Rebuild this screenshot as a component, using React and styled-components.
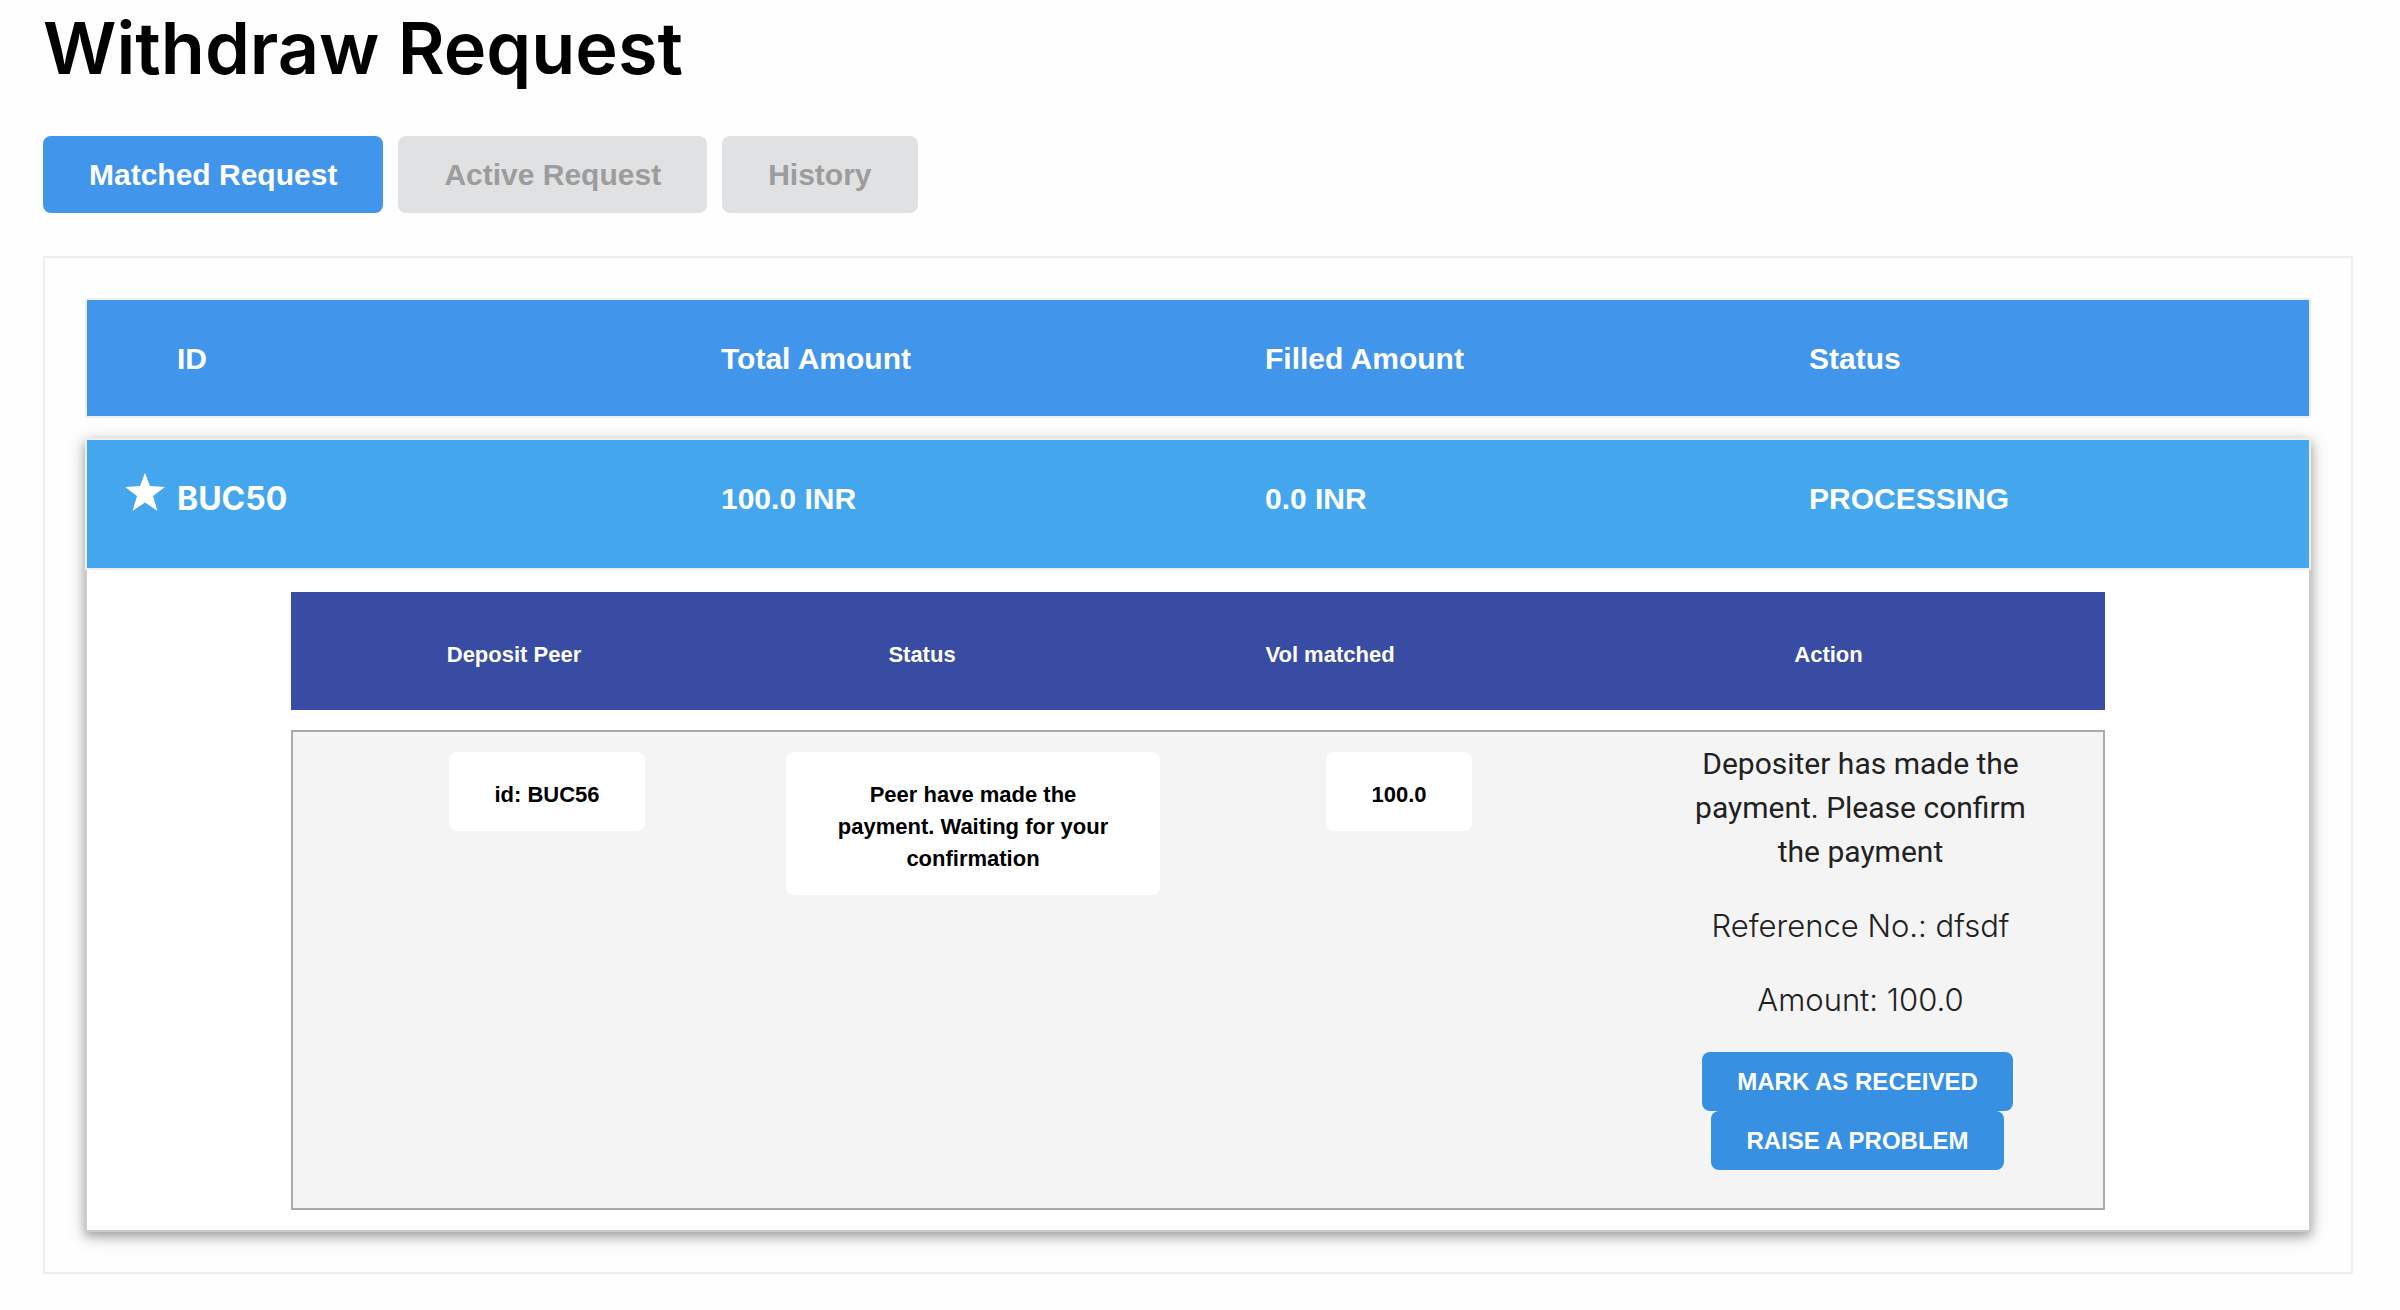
import React from "react";
import styled, { createGlobalStyle } from "styled-components";

const sans = '"Liberation Sans", Arial, sans-serif';
const display = 'Inter, "Open Sans", sans-serif';

const GlobalStyle = createGlobalStyle`
  *, *::before, *::after { box-sizing: border-box; }
  body { margin: 0; background: #fefefe; color: #000; font-family: ${sans}; }
`;

const Page = styled.main`
  padding: 8px 47px 36px 43px;
`;

const Title = styled.h1`
  margin: 0 0 48px;
  font: 600 72px/80px ${display};
`;

const Tabs = styled.nav`
  display: flex;
  gap: 15px;
  margin-bottom: 43px;
`;

const Tab = styled.button`
  padding: 17px 46px 16px;
  border: 0;
  border-radius: 8px;
  background: ${(p) => (p.$active ? "#4195eb" : "#e0e1e2")};
  color: ${(p) => (p.$active ? "#fff" : "#9c9c9c")};
  font: 700 30px/44px ${sans};
  cursor: pointer;
`;

const Panel = styled.section`
  padding: 40px;
  border: 2px solid #eee;
`;

const RequestTable = styled.table`
  display: flex;
  flex-direction: column;
  gap: 20px;
`;

const Head = styled.thead`
  display: block;
`;

const Card = styled.tbody`
  display: block;
  box-shadow: 0 4px 10px rgba(0, 0, 0, 0.3), 0 4px 20px rgba(0, 0, 0, 0.16);
`;

const RequestRow = styled.tr`
  display: grid;
  grid-template-columns: 596fr 544fr 544fr 500fr;
  padding: ${(p) => (p.$head ? "37px 0 35px 38px" : "37px 0 47px 38px")};
  border: 2px solid #eee;
  background: ${(p) => (p.$head ? "#4195eb" : "#44a7ee")};
  color: #fff;
  font: 700 30px/44px ${sans};
  text-align: left;
`;

const HeadCell = styled.th`
  padding: 0 0 0 ${(p) => (p.$indent ? "52px" : "0")};
`;

const Cell = styled.td`
  padding: 0;
`;

const IdCell = styled.td`
  display: flex;
  gap: 12px;
  padding: 0;
  font-family: ${display};
  font-size: 32px;
`;

const Star = styled.svg`
  width: 40px;
  height: 38px;
  margin-top: -4px;
  fill: #fff;
`;

const DetailRow = styled.tr`
  display: block;
  border: 2px solid #ccc;
  border-top: 0;
  background: #fff;
`;

const DetailCell = styled.td`
  display: block;
  padding: 22px 204px 20px;
`;

const PeerTable = styled.table`
  display: flex;
  flex-direction: column;
  gap: 20px;
  text-align: center;
`;

const PeerBody = styled.tbody`
  display: block;
`;

const PeerHeadRow = styled.tr`
  display: grid;
  grid-template-columns: 408fr 408fr 408fr 571fr;
  padding: 47px 0 39px 19px;
  background: #384ca4;
  color: #fff;
  font: 700 22px/32px ${sans};
`;

const PeerHeadCell = styled.th`
  padding: 0 0 0 ${(p) => (p.$last ? "18px" : "0")};
`;

const PeerRow = styled.tr`
  display: grid;
  grid-template-columns: 426fr 426fr 426fr 491fr;
  padding-left: 41px;
  border: 2px solid #aaa;
  background: #f4f4f4;
`;

const ChipCell = styled.td`
  padding: 20px 26px;
`;

const Chip = styled.span`
  display: inline-block;
  padding: 27px 45px 20px;
  border-radius: 8px;
  background: #fff;
  font: 700 22px/32px ${sans};
`;

const ActionCell = styled.td`
  padding: 10px 0 38px;
`;

const Message = styled.p`
  margin: 0 0 30px;
  padding: 0 66px 0 72px;
  color: #212121;
  font: 400 30px/44px Roboto, sans-serif;
`;

const Detail = styled(Message)`
  font: 300 31px/44px ${display};
`;

const Actions = styled.div`
  display: flex;
  flex-direction: column;
  align-items: center;
`;

const ActionButton = styled.button`
  padding: 14px 35px 13px;
  border: 0;
  border-radius: 8px;
  background: #3790e2;
  color: #fff;
  font: 700 24px/32px ${sans};
  text-transform: uppercase;
  cursor: pointer;
`;

const tabs = ["Matched Request", "Active Request", "History"];
const columns = ["ID", "Total Amount", "Filled Amount", "Status"];
const peerColumns = ["Deposit Peer", "Status", "Vol matched", "Action"];
const chips = [
  "id: BUC56",
  "Peer have made the payment. Waiting for your confirmation",
  "100.0",
];

export default function App() {
  return (
    <>
      <GlobalStyle />
      <Page>
        <Title>Withdraw Request</Title>
        <Tabs>
          {tabs.map((label, i) => (
            <Tab key={label} type="button" $active={i === 0}>
              {label}
            </Tab>
          ))}
        </Tabs>
        <Panel>
          <RequestTable>
            <Head>
              <RequestRow $head>
                {columns.map((name, i) => (
                  <HeadCell key={name} scope="col" $indent={i === 0}>
                    {name}
                  </HeadCell>
                ))}
              </RequestRow>
            </Head>
            <Card>
              <RequestRow>
                <IdCell>
                  <Star viewBox="0 0 40 38" aria-hidden="true">
                    <path d="M20 0 25 13 40 14 28 23 32.500 38 20 29.500 7.500 38 12 23 0 14 15 13Z" />
                  </Star>
                  BUC50
                </IdCell>
                <Cell>100.0 INR</Cell>
                <Cell>0.0 INR</Cell>
                <Cell>PROCESSING</Cell>
              </RequestRow>
              <DetailRow>
                <DetailCell colSpan={4}>
                  <PeerTable>
                    <Head>
                      <PeerHeadRow>
                        {peerColumns.map((name, i) => (
                          <PeerHeadCell key={name} scope="col" $last={i === 3}>
                            {name}
                          </PeerHeadCell>
                        ))}
                      </PeerHeadRow>
                    </Head>
                    <PeerBody>
                      <PeerRow>
                        {chips.map((text) => (
                          <ChipCell key={text}>
                            <Chip>{text}</Chip>
                          </ChipCell>
                        ))}
                        <ActionCell>
                          <Message>
                            Depositer has made the payment. Please confirm the
                            payment
                          </Message>
                          <Detail>Reference No.: dfsdf</Detail>
                          <Detail>Amount: 100.0</Detail>
                          <Actions>
                            <ActionButton type="button">
                              Mark as received
                            </ActionButton>
                            <ActionButton type="button">
                              Raise a problem
                            </ActionButton>
                          </Actions>
                        </ActionCell>
                      </PeerRow>
                    </PeerBody>
                  </PeerTable>
                </DetailCell>
              </DetailRow>
            </Card>
          </RequestTable>
        </Panel>
      </Page>
    </>
  );
}
